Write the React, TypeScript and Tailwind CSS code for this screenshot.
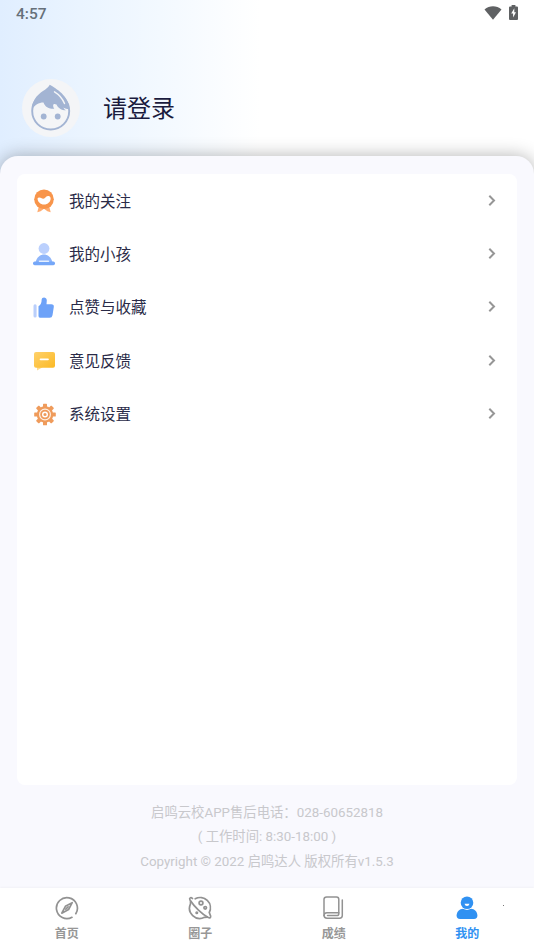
import type { ReactNode } from 'react';
import { clsx } from 'clsx';

type MenuItem = {
  label: string;
  icon: ReactNode;
};

type TabItem = {
  label: string;
  icon: ReactNode;
  active?: boolean;
};

function WifiIcon() {
  return (
    <svg width="18" height="14" viewBox="0 0 18 14" fill="#5f6163">
      <path d="M0.500 3.400C5.400-.8 12.600-.8 17.500 3.400L9 13.800Z" />
    </svg>
  );
}

function BatteryIcon() {
  return (
    <svg width="9" height="15" viewBox="0 0 9 15">
      <path
        d="M2.600 0h3.800v1.400H8q1 0 1 1V14q0 1-1 1H1q-1 0-1-1V2.400q0-1 1-1h1.600Z"
        fill="#5f6163"
      />
      <path d="M5.300 3.300 2.200 8.600h1.900v4L7 7.200H5.300Z" fill="#fff" />
    </svg>
  );
}

function Avatar() {
  return (
    <div className="flex size-[58px] items-center justify-center rounded-full bg-[#f4f5f7]">
      <svg width="42" height="48" viewBox="0 0 42 48">
        <circle cx="20.700" cy="27" r="18.500" fill="none" stroke="#a3b4d3" strokeWidth="1.900" />
        <path
          d="M1.800 26C2 14 10 9 15 5.800Q18.500 3.500 19.800.8C26 4.500 39 12 39.300 25C37 25 35 24.500 33.500 23.500C34 25 34.700 25.800 36 26.300C31.500 26.300 28 24 26.500 20.500C22.500 18.500 22.500 22 24.300 24.800C19 25 15 23 13.500 18.500C8.500 18.500 5 20.500 1.800 26Z"
          fill="#a3b4d3"
        />
        <path
          d="M24.500 7.800C29 10.500 32.500 14.500 34.500 19.500"
          fill="none"
          stroke="#f4f5f7"
          strokeWidth="1.400"
          strokeLinecap="round"
        />
        <circle cx="13.700" cy="32.500" r="2.900" fill="#a3b4d3" />
        <circle cx="27.700" cy="32.500" r="2.900" fill="#a3b4d3" />
      </svg>
    </div>
  );
}

function FollowIcon() {
  return (
    <svg width="24" height="24" viewBox="0 0 24 24">
      <path d="M7 16.500 5.300 23.200 8.600 22.200 12 19.700 15.400 22.200 18.700 23.200 17 16.500Z" fill="#ffac70" />
      <circle cx="12" cy="10.300" r="9.800" fill="#f8954b" />
      <path
        d="M5.600 9.200C6.600 7.900 8.500 8.800 10.200 9.500Q11.800 10.100 13.400 8.400C15.200 6.700 17.800 6.500 18.600 8.900C19 12.400 15.800 15.500 12 15.500C8.300 15.500 5.300 12.400 5.600 9.200Z"
        fill="#fff"
      />
    </svg>
  );
}

function ChildIcon() {
  return (
    <svg width="24" height="24" viewBox="0 0 24 24">
      <circle cx="12" cy="6.500" r="5.400" fill="#bbd0fd" />
      <path d="M3.500 20.500C4.500 15.500 8 12.500 12 12.500C16 12.500 19.500 15.500 20.500 20.500Z" fill="#8eb5fa" />
      <rect x="1" y="19.600" width="22" height="3.700" rx="1.700" fill="#75a7f8" />
      <path d="M7.500 19.300h9" stroke="#e5f0ff" strokeWidth="1.500" strokeLinecap="round" />
    </svg>
  );
}

function LikeIcon() {
  return (
    <svg width="24" height="24" viewBox="0 0 24 24">
      <rect x="1.500" y="9.300" width="3.100" height="13.200" rx="1.500" fill="#bacffb" />
      <path
        d="M6.500 11.200C9 10 9.600 7.300 9.600 5C9.600 1.600 14.600 1.700 14.800 5.300L14.500 9.200H19.300Q22.200 9.200 21.800 12L20.500 20.200Q20.100 22.700 17.600 22.700H8Q6.500 22.700 6.500 21Z"
        fill="#6da2f8"
      />
    </svg>
  );
}

function FeedbackIcon() {
  return (
    <svg width="24" height="24" viewBox="0 0 24 24">
      <defs>
        <linearGradient id="bubble" x1="0" y1="0" x2="1" y2="1">
          <stop offset="0" stopColor="#ffd16b" />
          <stop offset="1" stopColor="#fbb924" />
        </linearGradient>
      </defs>
      <path d="M5 17v4.500L11 18Z" fill="#ffdc8c" />
      <rect x="2" y="3" width="21" height="15.800" rx="2" fill="url(#bubble)" />
      <path d="M8.500 10.300h7.500" stroke="#fff" strokeWidth="1.700" strokeLinecap="round" />
    </svg>
  );
}

const GEAR_ANGLES = [0, 45, 90, 135, 180, 225, 270, 315];

function SettingsIcon() {
  return (
    <svg width="24" height="24" viewBox="0 0 24 24">
      <g fill="#ef9b5b">
        <circle cx="13" cy="12.500" r="8.300" />
        {GEAR_ANGLES.map((angle) => (
          <rect
            key={angle}
            x="11"
            y="1.700"
            width="4"
            height="5"
            rx="0.600"
            transform={`rotate(${angle} 13 12.500)`}
          />
        ))}
      </g>
      <circle cx="13" cy="12.500" r="5.400" fill="none" stroke="#fff0e2" strokeWidth="1.200" />
      <circle cx="13" cy="12.500" r="2.300" fill="none" stroke="#fff" strokeWidth="1.400" />
    </svg>
  );
}

function CompassIcon() {
  return (
    <svg width="24" height="24" viewBox="0 0 24 24" fill="none" stroke="#929292" strokeWidth="1.700" strokeLinecap="round">
      <path d="M17 21.300A10.500 10.500 0 1 1 20.800 17.700" />
      <path d="M17.200 6.700 13.600 13.500 6.800 17.200 10.400 10.300Z" strokeLinejoin="round" />
      <path d="m10.800 13.200 2.300-2.300" />
    </svg>
  );
}

function PlanetIcon() {
  return (
    <svg width="24" height="24" viewBox="0 0 24 24" fill="none" stroke="#929292" strokeWidth="1.700" strokeLinecap="round">
      <path d="M7.200 2.800A10.300 10.300 0 0 1 21.300 16.500L22.600 20C23 21.700 21.800 22.200 20.300 21.500C14.500 18.500 6 10.500 2 4C.9 2 2.800.8 4.500 2.500" />
      <path d="M2.500 5.500V7.800A10.300 10.300 0 0 0 16.500 21.300L19.500 21.200" />
      <circle cx="13" cy="7" r="1.900" />
      <circle cx="17.200" cy="11.800" r="1.300" />
      <circle cx="8.800" cy="16.800" r=".7" />
    </svg>
  );
}

function BookIcon() {
  return (
    <svg width="24" height="24" viewBox="0 0 24 24" fill="none" stroke="#929292" strokeWidth="1.500" strokeLinecap="round">
      <path d="M4.700 1H14.500Q16.800 1 16.800 3.300V16.700H5Q2 16.700 2 19.500V3.300Q2 1 4.700 1Z" strokeLinejoin="round" />
      <path d="M2 19.300Q2 22.200 5 22.200H17.500Q20.300 22.200 20.300 19.500V4" />
      <path d="M5.500 19.500H15.500Q17 19.200 16.800 16.700" />
    </svg>
  );
}

function MineIcon() {
  return (
    <svg width="24" height="24" viewBox="0 0 24 24" fill="#3091f2">
      <path d="M8 12.800H16C19.500 12.800 22.400 16 22.400 19.600Q22.400 23 19 23H5Q1.600 23 1.600 19.600C1.600 16 4.500 12.800 8 12.800Z" />
      <circle cx="12" cy="6.700" r="7.200" fill="#fff" />
      <circle cx="12" cy="6.700" r="6.300" />
      <path d="M9.500 7.700H14.500Q14 10 12 10Q10 10 9.500 7.700Z" fill="#fff" />
    </svg>
  );
}

const menuItems: MenuItem[] = [
  { label: '我的关注', icon: <FollowIcon /> },
  { label: '我的小孩', icon: <ChildIcon /> },
  { label: '点赞与收藏', icon: <LikeIcon /> },
  { label: '意见反馈', icon: <FeedbackIcon /> },
  { label: '系统设置', icon: <SettingsIcon /> },
];

const tabs: TabItem[] = [
  { label: '首页', icon: <CompassIcon /> },
  { label: '圈子', icon: <PlanetIcon /> },
  { label: '成绩', icon: <BookIcon /> },
  { label: '我的', icon: <MineIcon />, active: true },
];

export default function App() {
  return (
    <div className="flex h-[950px] w-[534px] flex-col overflow-hidden bg-[linear-gradient(90deg,#e0eeff_0px,#eaf4ff_80px,#f3f9ff_160px,#ffffff_260px)] font-[Roboto,'Noto_Sans_CJK_SC',sans-serif]">
      <div className="flex h-7 shrink-0 items-center justify-between pr-4 pl-4">
        <span className="pt-px text-[15.5px] font-medium text-[#66707a]">4:57</span>
        <div className="flex items-center gap-[7px] pb-[3px]">
          <WifiIcon />
          <BatteryIcon />
        </div>
      </div>

      <div className="flex h-32 shrink-0 items-center pt-[31px] pl-[22px]">
        <Avatar />
        <span className="mt-[3px] ml-[23px] text-2xl leading-8 text-[#1a1b3e]">请登录</span>
      </div>

      <div className="flex min-h-0 flex-1 flex-col rounded-t-[18px] bg-[#f9f9fe] px-[17px] pt-[18px] shadow-[0_0_18px_rgba(0,0,0,0.3)]">
        <div className="h-[611px] shrink-0 rounded-lg bg-white">
          {menuItems.map((item) => (
            <div key={item.label} className="flex h-[53.4px] items-center pr-5 pl-[15px]">
              {item.icon}
              <span className="mt-[3px] ml-[13px] flex-1 text-[15.5px] text-[#2a2b48]">
                {item.label}
              </span>
              <svg width="10" height="12" viewBox="0 0 10 12" fill="none" stroke="#969696" strokeWidth="2">
                <path d="m2.300.8 4.700 4.700-4.700 4.700" />
              </svg>
            </div>
          ))}
        </div>
        <div className="pt-[15.5px] text-center text-[13.35px] leading-[24.500px] text-[#c8c8cc]">
          <p>启鸣云校APP售后电话：028-60652818</p>
          <p>( 工作时间: 8:30-18:00 )</p>
          <p>Copyright © 2022 启鸣达人 版权所有v1.5.3</p>
        </div>
      </div>

      <div className="relative flex h-[62px] shrink-0 bg-white shadow-[0_-1px_2px_rgba(0,0,0,0.03)]">
        {tabs.map((tab) => (
          <div key={tab.label} className="flex flex-1 flex-col items-center pt-2">
            {tab.icon}
            <span
              className={clsx(
                'mt-[5px] text-xs leading-[18px] font-bold',
                tab.active ? 'text-[#3091f2]' : 'text-[#979797]',
              )}
            >
              {tab.label}
            </span>
          </div>
        ))}
        <span className="absolute top-[17px] left-[503px] size-px bg-[#777]" />
      </div>
    </div>
  );
}
